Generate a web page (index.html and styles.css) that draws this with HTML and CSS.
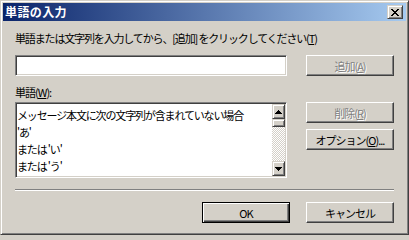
FILE: index.html
```html
<!DOCTYPE html>
<html lang="ja">
<head>
<meta charset="utf-8">
<title>単語の入力</title>
<link rel="stylesheet" href="styles.css">
</head>
<body>
<div class="window">
  <div class="titlebar">
    <span class="title">単語の入力</span>
    <div class="close raised">
      <svg width="8" height="7" viewBox="0 0 8 7" shape-rendering="crispEdges"><path fill="#000" d="M0 0h2v1H0zM6 0h2v1H6zM1 1h2v1H1zM5 1h2v1H5zM2 2h4v1H2zM3 3h2v1H3zM2 4h4v1H2zM1 5h2v1H1zM5 5h2v1H5zM0 6h2v1H0zM6 6h2v1H6z"/></svg>
    </div>
  </div>
  <div class="content">
    <div class="prompt">単語または文字列を入力してから、[追加] をクリックしてください(<u>T</u>)</div>
    <div class="row input-row">
      <div class="field input"></div>
      <div class="btn disabled">追加(<u>A</u>)</div>
    </div>
    <div class="label">単語(<u>W</u>):</div>
    <div class="row list-row">
      <div class="field list">
        <div class="items">
          <div class="item">メッセージ本文に次の文字列が含まれていない場合</div>
          <div class="item">'あ'</div>
          <div class="item">または 'い'</div>
          <div class="item">または 'う'</div>
        </div>
        <div class="scrollbar">
          <div class="sb-btn raised">
            <svg width="7" height="4" viewBox="0 0 7 4" shape-rendering="crispEdges"><path fill="#000" d="M3 0h1v1H3zM2 1h3v1H2zM1 2h5v1H1zM0 3h7v1H0z"/></svg>
          </div>
          <div class="thumb raised"></div>
          <div class="track"></div>
          <div class="sb-btn raised">
            <svg width="7" height="4" viewBox="0 0 7 4" shape-rendering="crispEdges"><path fill="#000" d="M0 0h7v1H0zM1 1h5v1H1zM2 2h3v1H2zM3 3h1v1H3z"/></svg>
          </div>
        </div>
      </div>
      <div class="side">
        <div class="btn disabled">削除(<u>R</u>)</div>
        <div class="btn">オプション(<u>O</u>)...</div>
      </div>
    </div>
    <div class="sep"></div>
    <div class="footer">
      <div class="btn default">OK</div>
      <div class="btn">キャンセル</div>
    </div>
  </div>
</div>
</body>
</html>
```
FILE: styles.css
```css
* { box-sizing: border-box; }
html, body { margin: 0; padding: 0; }
body {
  background: #d4d0c8;
  font-family: "Noto Sans CJK JP", "Noto Sans", sans-serif;
  font-size: 11px;
  color: #000;
}
.window {
  width: 409px;
  height: 235px;
  border: 1px solid;
  border-color: #d4d0c8 #404040 #404040 #d4d0c8;
  box-shadow: inset 1px 1px #fff, inset -1px -1px #808080;
  padding: 2px;
  background: #d4d0c8;
  display: flex;
  flex-direction: column;
}
.titlebar {
  height: 18px;
  flex: none;
  background: linear-gradient(to right, #0a246a, #a6caf0);
  display: flex;
  align-items: center;
  justify-content: space-between;
  padding: 0 3px 0 2px;
}
.title {
  color: #fff;
  font-weight: bold;
  font-size: 12px;
  line-height: 18px;
  letter-spacing: 0.4px;
}
.raised {
  background: #d4d0c8;
  border: 1px solid;
  border-color: #d4d0c8 #404040 #404040 #d4d0c8;
  box-shadow: inset 1px 1px #fff, inset -1px -1px #808080;
}
.close {
  width: 16px;
  height: 14px;
  display: flex;
  align-items: center;
  justify-content: center;
}
.content {
  flex: 1;
  padding: 0 12px;
  display: flex;
  flex-direction: column;
}
.prompt {
  margin-top: 10px;
  line-height: 14px;
  letter-spacing: -1.15px;
  white-space: nowrap;
}
.row {
  display: flex;
  gap: 19px;
}
.input-row {
  margin-top: 10px;
  height: 21px;
}
.field {
  width: 272px;
  background: #fff;
  border: 1px solid;
  border-color: #808080 #fff #fff #808080;
  box-shadow: inset 1px 1px #404040, inset -1px -1px #d4d0c8;
}
.btn {
  width: 88px;
  height: 21px;
  background: #d4d0c8;
  border: 1px solid;
  border-color: #fff #404040 #404040 #fff;
  box-shadow: inset -1px -1px #808080;
  display: flex;
  align-items: center;
  justify-content: center;
  line-height: 14px;
  letter-spacing: -1px;
  white-space: nowrap;
}
.btn.default {
  border-color: #000;
  box-shadow: inset 1px 1px #fff, inset -1px -1px #404040, inset -2px -2px #808080;
}
.disabled {
  color: #808080;
  text-shadow: 1px 1px 0 #fff;
}
u {
  text-decoration: underline;
  text-underline-offset: 1px;
}
.label {
  margin-top: 9px;
  line-height: 14px;
  letter-spacing: -1px;
}
.list-row {
  margin-top: 3px;
  height: 76px;
}
.list {
  height: 76px;
  padding: 1px;
  display: flex;
}
.items {
  flex: 1;
  padding-top: 3px;
  overflow: hidden;
  letter-spacing: -1.15px;
}
.item {
  height: 17px;
  line-height: 17px;
  white-space: nowrap;
}
.scrollbar {
  width: 13px;
  flex: none;
  display: flex;
  flex-direction: column;
}
.sb-btn {
  height: 15px;
  flex: none;
  display: flex;
  align-items: center;
  justify-content: center;
}
.thumb {
  height: 8px;
  flex: none;
}
.track {
  flex: 1;
  background: repeating-conic-gradient(#fff 0 25%, #d4d0c8 0 50%) 0 0 / 2px 2px;
}
.side {
  display: flex;
  flex-direction: column;
  gap: 6px;
}
.sep {
  margin-top: 11px;
  height: 2px;
  border-top: 1px solid #808080;
  border-bottom: 1px solid #fff;
}
.footer {
  margin-top: 11px;
  display: flex;
  justify-content: flex-end;
  gap: 16px;
}
```
